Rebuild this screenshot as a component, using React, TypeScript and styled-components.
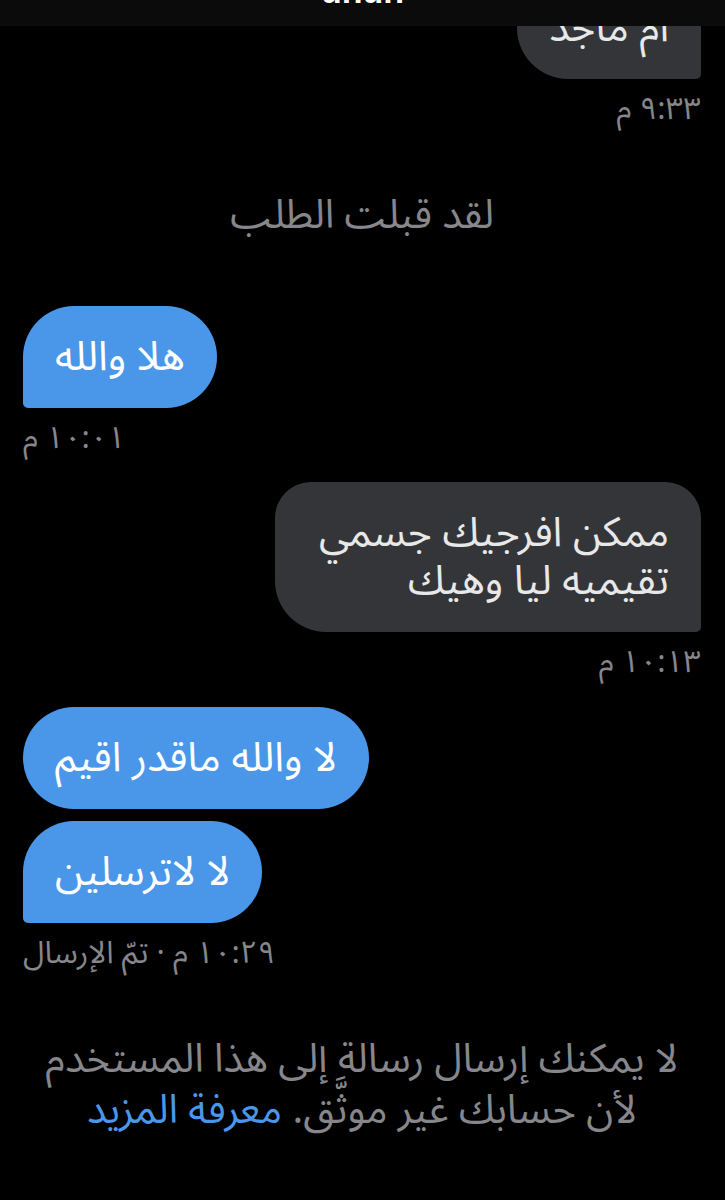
import styled, { createGlobalStyle } from 'styled-components';

const GlobalStyle = createGlobalStyle`
    html, body {
        margin: 0;
        padding: 0;
        background: #000;
    }
    body {
        font-family: "Noto Sans Arabic", "DejaVu Sans", "Noto Sans", sans-serif;
    }
`;

const Screen = styled.div`
    position: relative;
    width: 725px;
    height: 1200px;
    overflow: hidden;
    background: #000;
    direction: rtl;
`;

const Header = styled.div`
    position: absolute;
    top: 0;
    left: 0;
    right: 0;
    height: 26px;
    z-index: 2;
    background: #0b0b0b;
    overflow: hidden;
    display: flex;
    justify-content: center;
    align-items: flex-end;
    .title {
        color: #fff;
        font-family: "Liberation Sans", Arial, sans-serif;
        font-weight: 700;
        font-size: 34px;
        line-height: 1;
        margin-bottom: 18px;
        direction: ltr;
    }
`;

const Thread = styled.div`
    display: flex;
    flex-direction: column;
    padding: 0 24px 0 23px;
    margin-top: -23px;
`;

type Side = 'in' | 'out';
type Corner = 'tail' | 'pill';

const radius = (side: Side, corner: Corner) => {
    const big = '51px';
    const small = '5px';
    if (corner === 'pill') return big;
    const tl = side === 'in' ? big : '36px';
    const tr = side === 'in' ? big : '36px';
    const br = side === 'out' ? small : big;
    const bl = side === 'in' ? small : big;
    return `${tl} ${tr} ${br} ${bl}`;
};

const Bubble = styled.div<{ $side: Side; $corner: Corner; $gap?: number }>`
    align-self: ${({ $side }) => $side === 'out' ? 'flex-start' : 'flex-end'};
    margin-top: ${({ $gap }) => $gap ?? 0}px;
    max-width: 362px;
    padding: 27px 32px;
    font-size: 41px;
    line-height: 48px;
    color: ${({ $side }) => $side === 'in' ? '#fff' : '#e8e8e8'};
    background: ${({ $side }) => $side === 'in' ? '#4a97e9' : '#333538'};
    border-radius: ${({ $side, $corner }) => radius($side, $corner)};
`;

const Stamp = styled.div<{ $side: Side }>`
    align-self: ${({ $side }) => $side === 'out' ? 'flex-start' : 'flex-end'};
    margin-top: 12px;
    font-size: 31px;
    line-height: 36px;
    color: #86868b;
`;

const Notice = styled.div<{ $gap: number }>`
    margin-top: ${({ $gap }) => $gap}px;
    text-align: center;
    font-size: 40px;
    line-height: 40px;
    color: #86868b;
`;

const Footer = styled.div`
    margin-top: 63px;
    padding: 0 6px;
    text-align: center;
    font-size: 40px;
    line-height: 51px;
    color: #86868b;
    a {
        color: #4a97e9;
        text-decoration: none;
    }
`;

export default function App() {
    return <>
        <GlobalStyle />
        <Screen>
            <Header><span className="title">unun</span></Header>
            <Thread>
                <Bubble $side="out" $corner="tail">ام ماجد</Bubble>
                <Stamp $side="out">٩:٣٣ م</Stamp>

                <Notice $gap={69}>لقد قبلت الطلب</Notice>

                <Bubble $side="in" $corner="tail" $gap={70}>هلا والله</Bubble>
                <Stamp $side="in">١٠:٠١ م</Stamp>

                <Bubble $side="out" $corner="tail" $gap={26}>ممكن افرجيك جسمي تقيميه ليا وهيك</Bubble>
                <Stamp $side="out">١٠:١٣ م</Stamp>

                <Bubble $side="in" $corner="pill" $gap={27}>لا والله ماقدر اقيم</Bubble>
                <Bubble $side="in" $corner="tail" $gap={12}>لا لاترسلين</Bubble>
                <Stamp $side="in">١٠:٢٩ م · تمّ الإرسال</Stamp>

                <Footer>
                    لا يمكنك إرسال رسالة إلى هذا المستخدم لأن حسابك غير موثَّق. <a href="#">معرفة المزيد</a>
                </Footer>
            </Thread>
        </Screen>
    </>;
}
